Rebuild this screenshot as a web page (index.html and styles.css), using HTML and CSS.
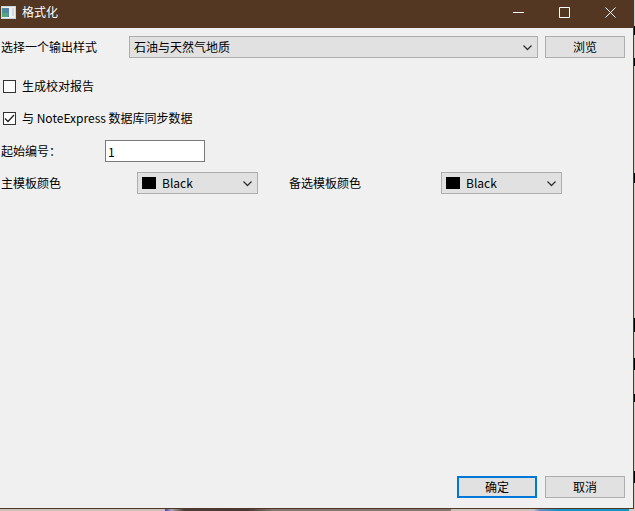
FILE: index.html
```html
<!DOCTYPE html>
<html lang="zh-CN">
<head>
<meta charset="utf-8">
<title>格式化</title>
<link rel="stylesheet" href="styles.css">
</head>
<body>
<form class="dialog">
  <header class="titlebar">
    <svg class="app-icon" width="15" height="13" viewBox="0 0 15 13">
      <rect width="15" height="13" fill="#c9d3da"/>
      <rect x="1" y="1" width="13" height="11" fill="#eef1f2"/>
      <rect x="1" y="2" width="7" height="9" fill="#4b8f9c"/>
      <rect x="1" y="7" width="6" height="4" fill="#55a583"/>
      <rect x="5" y="2" width="3" height="4" fill="#5a7fae"/>
      <rect x="11" y="2" width="2" height="8" fill="#d3dadd"/>
    </svg>
    <h1 class="title">格式化</h1>
    <button type="button" class="caption" aria-label="最小化"><svg width="11" height="11" viewBox="0 0 11 11"><path d="M0 5.5h11"/></svg></button>
    <button type="button" class="caption" aria-label="最大化"><svg width="11" height="11" viewBox="0 0 11 11"><path d="M.5.5h10v10H.5z"/></svg></button>
    <button type="button" class="caption" aria-label="关闭"><svg width="11" height="11" viewBox="0 0 11 11"><path d="M.5.5l10 10M10.5.5l-10 10"/></svg></button>
  </header>

  <main class="content">
    <div class="row">
      <label class="style-label" for="style">选择一个输出样式</label>
      <span class="combo style-combo">
        <select id="style"><option>石油与天然气地质</option></select>
        <svg class="arrow" width="9" height="6" viewBox="0 0 9 6"><path d="M.5.5l4 4 4-4"/></svg>
      </span>
      <button type="button" class="button">浏览</button>
    </div>

    <div class="checks">
      <label class="check"><input type="checkbox">生成校对报告</label>
      <label class="check"><input type="checkbox" checked>与 NoteExpress 数据库同步数据</label>
    </div>

    <div class="row">
      <label class="start-label" for="start">起始编号：</label>
      <input class="number" id="start" type="text" value="1">
    </div>

    <div class="row colors">
      <label class="color-label" for="main-color">主模板颜色</label>
      <span class="combo color-combo">
        <span class="swatch"></span>
        <select id="main-color"><option>Black</option></select>
        <svg class="arrow" width="9" height="6" viewBox="0 0 9 6"><path d="M.5.5l4 4 4-4"/></svg>
      </span>
      <label class="color-label alt" for="alt-color">备选模板颜色</label>
      <span class="combo color-combo">
        <span class="swatch"></span>
        <select id="alt-color"><option>Black</option></select>
        <svg class="arrow" width="9" height="6" viewBox="0 0 9 6"><path d="M.5.5l4 4 4-4"/></svg>
      </span>
    </div>
  </main>

  <footer class="actions">
    <button type="button" class="button default">确定</button>
    <button type="button" class="button">取消</button>
  </footer>
</form>
</body>
</html>
```
FILE: styles.css
```css
* {
    box-sizing: border-box;
}

/* desktop behind the dialog shows along the right and bottom edges */
body {
    display: flex;
    margin: 0;
    padding: 0 1px 2px 0;
    height: 100vh;
    background:
        linear-gradient(transparent 26px, #000 26px, #000 35px,
            transparent 35px, transparent 58px, #000 58px, #000 66px,
            transparent 66px, transparent 173px, #000 173px, #000 183px,
            transparent 183px, transparent 318px, #000 318px, #000 332px,
            transparent 332px, transparent 358px, #000 358px, #000 370px,
            transparent 370px, transparent 394px, #000 394px, #000 402px,
            transparent 402px, transparent 471px, #000 471px, #000 483px,
            transparent 483px) right / 1px 100% no-repeat,
        linear-gradient(to right,
            #c9c2bd 0, #c9c2bd 26%, #4440b0 26%, #aaa 27%, #4a3f3c 29%,
            #453a38 39%, #857872 43%, #857872 71%, #c9c2bd 71%,
            #c9c2bd 84%, #6a8fc0 85%, #1595c4 88%, #1595c4 99%, #d5c9c2 99%);
    color: #000;
    font: 12px/16px "Noto Sans CJK SC", sans-serif;
}

button,
input,
select {
    margin: 0;
    font: inherit;
    color: inherit;
}

.dialog {
    display: flex;
    flex: 1;
    flex-direction: column;
    background: #f0f0f0;
    border: solid #533722;
    border-width: 0 1px 1px 0;
}

.titlebar {
    display: flex;
    align-items: center;
    height: 28px;
    padding: 0 0 4px 1px;
    background: #533722;
    color: #fff;
}

.title {
    flex: 1;
    margin: 0 0 0 6px;
    font-size: 12px;
    font-weight: normal;
}

.caption {
    display: flex;
    align-items: center;
    justify-content: center;
    width: 46px;
    height: 24px;
    padding: 0;
    border: 0;
    background: none;
}

.caption path {
    fill: none;
    stroke: #fff;
}

.content {
    flex: 1;
    padding: 8px 8px 0 1px;
}

.row {
    display: flex;
    align-items: center;
    height: 22px;
}

.style-label {
    width: 128px;
}

.style-combo {
    flex: 1;
    margin-right: 7px;
}

.combo {
    position: relative;
    height: 22px;
}

.combo select {
    appearance: none;
    display: block;
    width: 100%;
    height: 22px;
    padding: 0 20px 0 4px;
    border: 1px solid #adadad;
    border-radius: 0;
    background: #e1e1e1;
}

.arrow {
    position: absolute;
    top: 9px;
    right: 6px;
    pointer-events: none;
}

.arrow path {
    fill: none;
    stroke: #333;
    stroke-width: 1.3;
}

.button {
    width: 80px;
    height: 22px;
    padding: 0;
    border: 1px solid #adadad;
    background: #e1e1e1;
}

.button.default {
    border: 2px solid #0078d7;
}

.checks {
    display: grid;
    gap: 10px;
    margin: 17px 0 11px;
}

.check {
    display: flex;
    align-items: center;
    gap: 6px;
    height: 22px;
    padding-left: 2px;
}

.check input {
    appearance: none;
    width: 13px;
    height: 13px;
    border: 1px solid #333;
    background: #fff;
}

.check input:checked {
    background: #fff url("data:image/svg+xml,%3Csvg xmlns='http://www.w3.org/2000/svg' viewBox='0 0 11 11'%3E%3Cpath d='M1 5.5l3 3 6-6.5' fill='none' stroke='%23222' stroke-width='1.3'/%3E%3C/svg%3E") center / 11px no-repeat;
}

.start-label {
    width: 104px;
}

.number {
    width: 100px;
    height: 22px;
    padding: 0 2px;
    border: 1px solid #7a7a7a;
    background: #fff;
}

.colors {
    margin-top: 10px;
}

.color-label {
    width: 136px;
}

.color-label.alt {
    width: 152px;
    margin-left: 31px;
}

.color-combo {
    width: 121px;
}

.color-combo select {
    padding-left: 24px;
}

.swatch {
    position: absolute;
    top: 5px;
    left: 5px;
    width: 14px;
    height: 12px;
    background: #000;
    pointer-events: none;
}

.actions {
    display: flex;
    justify-content: flex-end;
    gap: 8px;
    padding: 0 8px 10px;
}
```
